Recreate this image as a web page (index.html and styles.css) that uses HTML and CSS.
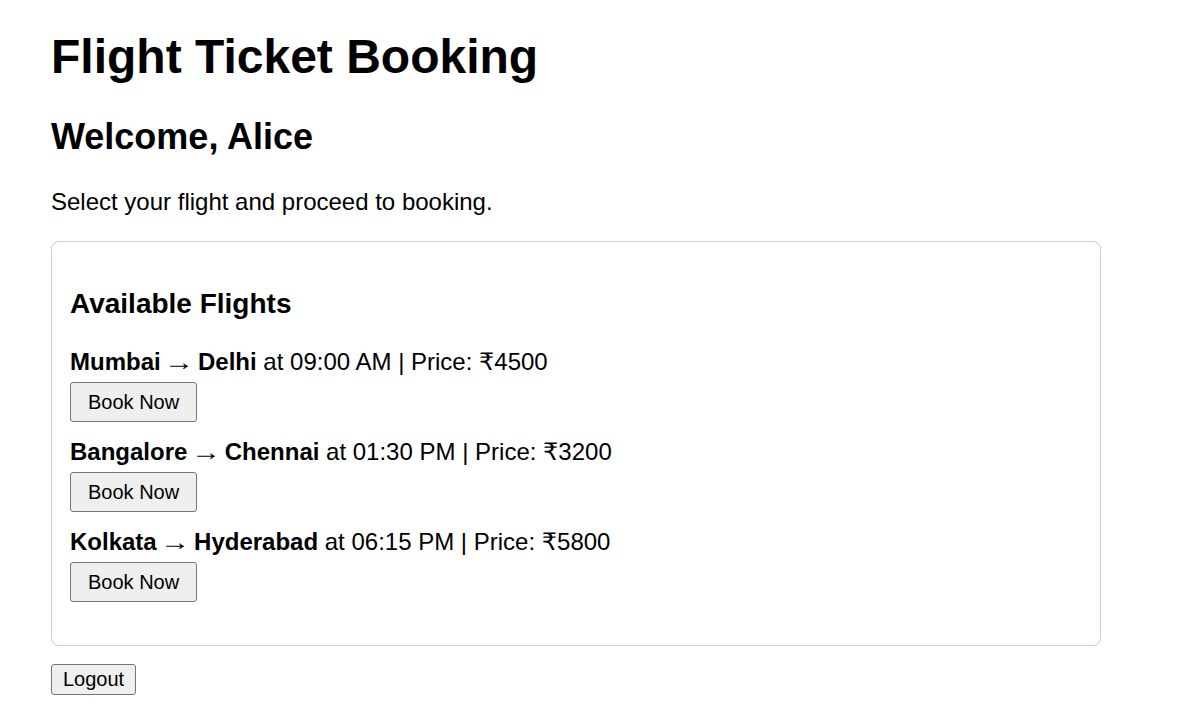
FILE: index.html
```html
<!DOCTYPE html>
<html lang="en">
<head>
<meta charset="utf-8">
<title>Flight Ticket Booking</title>
<link rel="stylesheet" href="styles.css">
</head>
<body>
<div class="page">
  <h1 class="title">Flight Ticket Booking</h1>
  <h2 class="welcome">Welcome, Alice</h2>
  <p class="intro">Select your flight and proceed to booking.</p>
  <section class="card">
    <h3 class="card-title">Available Flights</h3>
    <div class="flight">
      <div class="flight-info"><strong>Mumbai</strong> <span class="arrow">→</span> <strong>Delhi</strong> at 09:00 AM | Price: ₹4500</div>
      <button class="btn-book">Book Now</button>
    </div>
    <div class="flight">
      <div class="flight-info"><strong>Bangalore</strong> <span class="arrow">→</span> <strong>Chennai</strong> at 01:30 PM | Price: ₹3200</div>
      <button class="btn-book">Book Now</button>
    </div>
    <div class="flight">
      <div class="flight-info"><strong>Kolkata</strong> <span class="arrow">→</span> <strong>Hyderabad</strong> at 06:15 PM | Price: ₹5800</div>
      <button class="btn-book">Book Now</button>
    </div>
  </section>
  <button class="btn-logout">Logout</button>
</div>
</body>
</html>
```

FILE: styles.css
```css
html, body {
  margin: 0;
  padding: 0;
  background: #ffffff;
}

body {
  font-family: "Liberation Sans", Arial, "DejaVu Sans", sans-serif;
  font-size: 24px;
  color: #000000;
}

.page {
  padding: 0 0 0 51px;
}

.title {
  font-size: 48px;
  font-weight: bold;
  margin: 29px 0 32px;
}

.welcome {
  font-size: 36px;
  font-weight: bold;
  margin: 32px 0 30px;
}

.intro {
  margin: 0 0 25px;
}

.card {
  width: 1050px;
  box-sizing: border-box;
  border: 1px solid #cccccc;
  border-radius: 8px;
  padding: 18px 18px 27px;
}

.card-title {
  font-size: 28px;
  font-weight: bold;
  margin: 28px 0 28px;
}

.flight {
  display: flex;
  flex-direction: column;
  align-items: flex-start;
  margin-bottom: 16px;
}

.flight-info {
  line-height: 28px;
}

.arrow {
  display: inline-block;
  transform: scaleX(1.25);
}

.btn-book {
  margin-top: 6px;
  font-family: "Liberation Sans", Arial, sans-serif;
  font-size: 20px;
  line-height: 23px;
  color: #000000;
  background: #efefef;
  border: 1px solid #767676;
  border-radius: 3px;
  padding: 7.5px 17px;
  height: 40px;
  box-sizing: border-box;
}

.btn-logout {
  margin-top: 18px;
  font-family: "Liberation Sans", Arial, sans-serif;
  font-size: 20px;
  line-height: 23px;
  color: #000000;
  background: #efefef;
  border: 1px solid #767676;
  border-radius: 3px;
  padding: 3px 11px;
  height: 31px;
  box-sizing: border-box;
}
```
